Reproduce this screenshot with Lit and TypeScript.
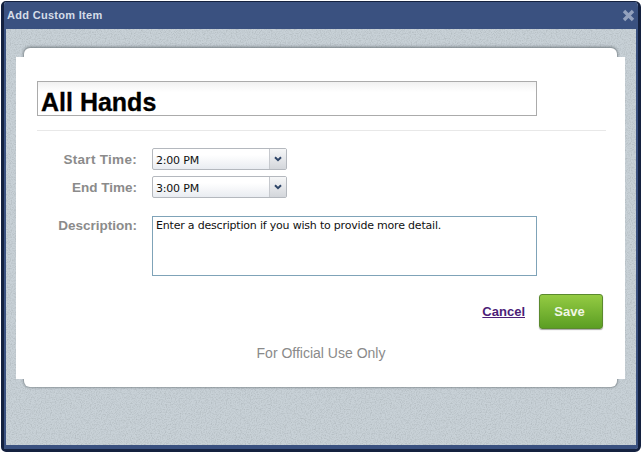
import { LitElement, html, css } from "lit";
import { customElement } from "lit/decorators.js";

@customElement("app-root")
export class AppRoot extends LitElement {
  static styles = css`
    :host { display: block; width: 641px; height: 452px; box-sizing: border-box; background: #fff; font-family: "Liberation Sans", Arial, sans-serif; }
    .window { position: relative; box-sizing: border-box; width: 640px; height: 451px; margin: 1px 0 0 1px; background: #c8d1d7; border: 1px solid #14213f; border-radius: 5px 6px 6px 5px; border-width: 1px 3px 3px 3px; display: flex; flex-direction: column; overflow: hidden; }
    .noise { position: absolute; left: 0; top: 0; width: 100%; height: 100%; }
    .titlebar { position: relative; height: 27px; flex: none; background: #3a5180; display: flex; align-items: center; justify-content: space-between; padding: 0 2px 1px 3px; box-sizing: border-box; }
    .titlebar span { color: #d5dde8; font-weight: bold; font-size: 11px; letter-spacing: 0.3px; margin-bottom: 1px; }
    .close { width: 13px; height: 13px; display: block; margin: 1px 1px 0 0; }
    .body { position: relative; flex: 1; min-height: 0; border: solid #3a5180; border-width: 0 2px 4px 2px; padding: 19px 19px 0 18px; display: flex; flex-direction: column; }
    .card { position: relative; height: 339px; box-sizing: border-box; background: #fff; border-radius: 6px; box-shadow: 0 0 2px 1px rgba(110,118,124,.6), 0 -2px 3px rgba(110,118,124,.35); padding: 33px 12px 0 13px; display: flex; flex-direction: column; }
    .card::before { content: ""; position: absolute; left: -8px; right: -8px; top: 9px; bottom: 8px; background: #fff; }
    .card > * { position: relative; }
    .title { box-sizing: border-box; width: 500px; height: 35px; border: 1px solid #ababab; background: linear-gradient(#f1f1f1, #fff 10px); font-weight: bold; font-size: 25px; -webkit-text-stroke: 0.3px #000; color: #000; padding: 7px 0 0 3px; display: flex; align-items: center; }
    .rule { height: 1px; background: #e8e8e8; margin: 14px 0 0 0; width: 569px; }
    .form { display: grid; grid-template-columns: 100px auto; column-gap: 15px; row-gap: 6px; margin-top: 17px; justify-content: start; align-items: center; }
    .label { text-align: right; font-size: 13.5px; font-weight: bold; color: #8b8b8b; }
    .label.wide { letter-spacing: 0.3px; }
    .label.top { align-self: start; margin-top: 14px; }
    .select { box-sizing: border-box; width: 135px; height: 22px; border: 1px solid #b4b8be; border-radius: 2px; background: linear-gradient(#fff, #fff 30%, #e9ecf1); display: flex; font: 11px "DejaVu Sans", sans-serif; letter-spacing: -0.2px; color: #111; }
    .select .val { flex: 1; padding: 2px 0 0 3px; display: flex; align-items: center; }
    .arrow { width: 16px; border-left: 1px solid #c6c9ce; background: linear-gradient(#f6f7f8, #d3d6db); display: flex; align-items: center; justify-content: center; }
    .arrow svg { width: 8px; height: 6px; display: block; }
    .desc { box-sizing: border-box; width: 385px; height: 60px; margin-top: 12px; border: 1px solid #7fa3b8; padding: 2px 3px; font: 11px "DejaVu Sans", sans-serif; letter-spacing: -0.2px; color: #111; white-space: nowrap; }
    .actions { display: flex; justify-content: flex-end; align-items: center; gap: 14px; margin: 18px 3px 0 0; width: 566px; }
    .cancel { color: #4c1e78; font-size: 13px; font-weight: bold; text-decoration: underline; }
    .save { box-sizing: border-box; width: 64px; height: 35px; border-radius: 3px; border: 1px solid #5b8a2e; background: linear-gradient(#94cb43, #5b9e23); color: #f0f6e4; font-size: 13px; font-weight: bold; display: flex; align-items: center; justify-content: center; padding-right: 3px; box-shadow: 0 1px 1px rgba(0,0,0,.35); }
    .foot { text-align: center; width: 568px; margin-top: 16px; font-size: 14px; color: #8a8a8a; }
  `;

  private sel(v: string) {
    return html`<div class="select"><div class="val">${v}</div><div class="arrow"><svg viewBox="0 0 8 6"><path d="M1 1.2 L4 4.2 L7 1.2" fill="none" stroke="#2f4668" stroke-width="2"/></svg></div></div>`;
  }

  render() {
    return html`
      <div class="window">
        <svg class="noise" aria-hidden="true"><filter id="n"><feTurbulence type="fractalNoise" baseFrequency="0.8" numOctaves="2"/><feColorMatrix values="0 0 0 0 0.45 0 0 0 0 0.5 0 0 0 0 0.53 2.2 0 0 0 -0.9"/></filter><rect width="100%" height="100%" filter="url(#n)"/></svg>
        <div class="titlebar">
          <span>Add Custom Item</span>
          <svg class="close" viewBox="0 0 13 13"><path d="M2 2 L11 11 M11 2 L2 11" stroke="#93a1bd" stroke-width="3.4"/></svg>
        </div>
        <div class="body">
          <div class="card">
            <div class="title">All Hands</div>
            <div class="rule"></div>
            <div class="form">
              <div class="label wide">Start Time:</div>${this.sel("2:00 PM")}
              <div class="label">End Time:</div>${this.sel("3:00 PM")}
              <div class="label top">Description:</div>
              <div class="desc">Enter a description if you wish to provide more detail.</div>
            </div>
            <div class="actions"><span class="cancel">Cancel</span><div class="save">Save</div></div>
            <div class="foot">For Official Use Only</div>
          </div>
        </div>
      </div>
    `;
  }
}
